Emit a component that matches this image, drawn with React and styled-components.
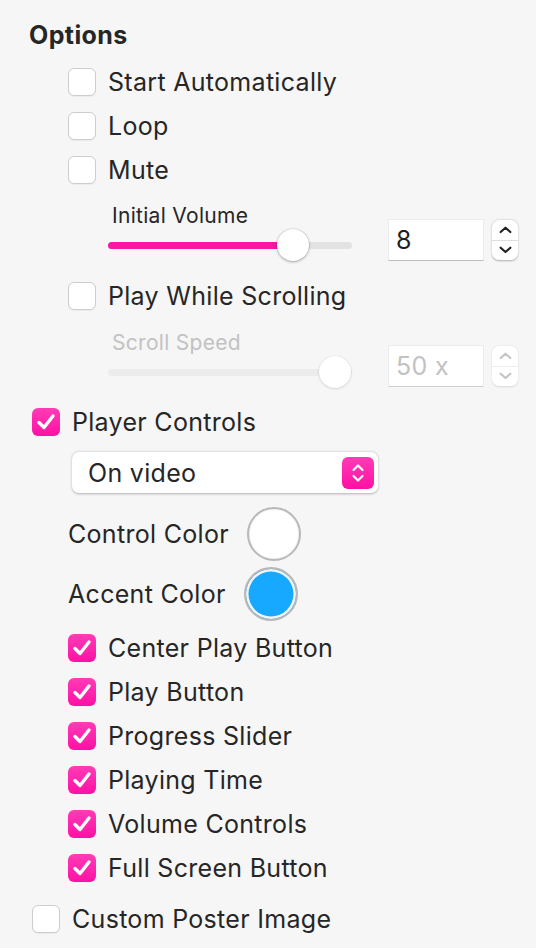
import React from 'react';
import styled, { createGlobalStyle } from 'styled-components';

const GlobalStyle = createGlobalStyle`
  body {
    margin: 0;
    background: #f6f6f6;
    font-family: Inter, "Liberation Sans", sans-serif;
    color: #262626;
  }
`;

const PINK = 'linear-gradient(#ff3cb6, #ff10a4)';

const Panel = styled.div`
  width: 536px;
  height: 948px;
  padding-left: 32px;
  box-sizing: border-box;
  overflow: hidden;
`;

const Heading = styled.div`
  font-size: 25px;
  font-weight: 700;
  letter-spacing: 0.4px;
  line-height: 26px;
  margin: 22px 0 12px -3px;
`;

const Group = styled.div`
  padding-left: ${p => p.indent ?? 36}px;
  margin-top: ${p => p.top || 0}px;
`;

const Row = styled.label`
  display: flex;
  align-items: center;
  gap: 12px;
  height: 44px;
  font-size: 25px;
  letter-spacing: 0.3px;
`;

const Box = styled.span`
  width: 28px;
  height: 28px;
  flex-shrink: 0;
  box-sizing: border-box;
  border-radius: 6px;
  display: flex;
  align-items: center;
  justify-content: center;
  background: ${p => (p.checked ? PINK : '#fff')};
  border: ${p => (p.checked ? 'none' : '1px solid #cdcdcd')};
  box-shadow: ${p => (p.checked ? 'none' : '0 1px 1px rgba(0,0,0,0.05)')};
`;

const SliderBlock = styled.div`
  display: flex;
  align-items: flex-end;
  margin-top: ${p => p.top}px;
`;

const SliderCol = styled.div`
  width: 244px;
  margin-left: 76px;
`;

const SmallLabel = styled.div`
  font-size: 21px;
  letter-spacing: 0.3px;
  line-height: 22px;
  margin-left: 4px;
  color: ${p => (p.disabled ? '#c2c2c2' : '#262626')};
`;

const Track = styled.div`
  position: relative;
  height: 32px;
  margin-top: 2px;
  &::before {
    content: '';
    position: absolute;
    left: 0;
    right: 0;
    top: 13px;
    height: 7px;
    border-radius: 4px;
    background: ${p => (p.disabled ? '#ececec' : '#e2e2e2')};
  }
`;

const Fill = styled.div`
  position: absolute;
  left: 0;
  top: 13px;
  height: 7px;
  border-radius: 4px;
  background: #ff14a8;
`;

const Thumb = styled.div`
  position: absolute;
  top: 0;
  width: 32px;
  height: 32px;
  margin-left: -16px;
  border-radius: 50%;
  background: #fff;
  box-shadow: 0 1px 3px rgba(0, 0, 0, ${p => (p.disabled ? 0.12 : 0.3)}),
    0 0 0 0.5px rgba(0, 0, 0, ${p => (p.disabled ? 0.06 : 0.12)});
`;

const NumberWrap = styled.div`
  display: flex;
  align-items: center;
  gap: 8px;
  margin-left: 36px;
  margin-bottom: ${p => p.bottom || 0}px;
`;

const NumberInput = styled.div`
  width: 96px;
  height: 42px;
  box-sizing: border-box;
  background: #fff;
  border: 1px solid #ececec;
  border-bottom: 1px solid ${p => (p.disabled ? '#cfcfcf' : '#bdbdbd')};
  padding-left: 7px;
  font-size: 25px;
  line-height: 40px;
  letter-spacing: 0.3px;
  color: ${p => (p.disabled ? '#c2c2c2' : '#1e1e1e')};
`;

const Stepper = styled.div`
  width: 26px;
  height: 40px;
  border-radius: 7px;
  background: #fff;
  box-shadow: 0 0.5px 2px rgba(0, 0, 0, ${p => (p.disabled ? 0.12 : 0.3)});
  display: flex;
  flex-direction: column;
  color: ${p => (p.disabled ? '#c4c4c4' : '#222')};
  & > div {
    flex: 1;
    display: flex;
    align-items: center;
    justify-content: center;
  }
  & > div + div {
    border-top: 1px solid ${p => (p.disabled ? '#eee' : '#dedede')};
  }
`;

const Select = styled.div`
  width: 306px;
  height: 41px;
  box-sizing: border-box;
  margin: 8px 0 0 40px;
  background: #fff;
  border-radius: 7px;
  box-shadow: 0 0.5px 2.5px rgba(0, 0, 0, 0.28);
  display: flex;
  align-items: center;
  justify-content: space-between;
  padding: 0 4px 0 16px;
  font-size: 25px;
  letter-spacing: 0.3px;
`;

const SelectButton = styled.div`
  width: 32px;
  height: 32px;
  border-radius: 6px;
  background: ${PINK};
  display: flex;
  align-items: center;
  justify-content: center;
`;

const ColorRow = styled.div`
  display: flex;
  align-items: center;
  gap: 18px;
  height: 56px;
  font-size: 25px;
  letter-spacing: 0.3px;
  margin-top: ${p => p.top}px;
`;

const Swatch = styled.div`
  width: 54px;
  height: 54px;
  box-sizing: border-box;
  border-radius: 50%;
  border: 2.5px solid #b8b8b8;
  background: ${p => p.color};
  box-shadow: inset 0 0 0 ${p => (p.ring ? 2.5 : 1)}px #f4f4f4;
`;

const Check = () => (
  <svg width="20" height="18" viewBox="0 0 20 18">
    <path d="M3 9.5 L8 14.5 L17 3" fill="none" stroke="#fff" strokeWidth="3.4" strokeLinecap="round" strokeLinejoin="round" />
  </svg>
);

const Chevron = ({ down, color = 'currentColor', size = 13 }) => (
  <svg width={size} height={size * 0.6} viewBox="0 0 12 7">
    <path d={down ? 'M1.5 1.5 L6 5.5 L10.5 1.5' : 'M1.5 5.5 L6 1.5 L10.5 5.5'} fill="none" stroke={color} strokeWidth="2" strokeLinecap="round" strokeLinejoin="round" />
  </svg>
);

const CheckRow = ({ label, checked }) => (
  <Row>
    <Box checked={checked}>{checked && <Check />}</Box>
    {label}
  </Row>
);

const NumberField = ({ value, disabled, bottom }) => (
  <NumberWrap bottom={bottom}>
    <NumberInput disabled={disabled}>{value}</NumberInput>
    <Stepper disabled={disabled}>
      <div><Chevron /></div>
      <div><Chevron down /></div>
    </Stepper>
  </NumberWrap>
);

const Slider = ({ label, value, disabled, top, bottom }) => (
  <SliderBlock top={top}>
    <SliderCol>
      <SmallLabel disabled={disabled}>{label}</SmallLabel>
      <Track disabled={disabled}>
        {!disabled && <Fill style={{ width: `${value}%` }} />}
        <Thumb disabled={disabled} style={{ left: `${value}%` }} />
      </Track>
    </SliderCol>
    <NumberField value={disabled ? '50 x' : '8'} disabled={disabled} bottom={bottom} />
  </SliderBlock>
);

const controls = [
  'Center Play Button',
  'Play Button',
  'Progress Slider',
  'Playing Time',
  'Volume Controls',
  'Full Screen Button',
];

export default function App() {
  return (
    <Panel>
      <GlobalStyle />
      <Heading>Options</Heading>
      <Group>
        <CheckRow label="Start Automatically" />
        <CheckRow label="Loop" />
        <CheckRow label="Mute" />
      </Group>
      <Slider label="Initial Volume" value={76} top={13} />
      <Group top={13}>
        <CheckRow label="Play While Scrolling" />
      </Group>
      <Slider label="Scroll Speed" value={93} disabled top={14} bottom={1} />
      <Group indent={0} top={12}>
        <CheckRow label="Player Controls" checked />
      </Group>
      <Select>
        On video
        <SelectButton>
          <svg width="16" height="24" viewBox="0 0 16 24">
            <path d="M3.5 9 L8 4.5 L12.5 9 M3.5 15 L8 19.5 L12.5 15" fill="none" stroke="#fff" strokeWidth="2.2" strokeLinecap="round" strokeLinejoin="round" />
          </svg>
        </SelectButton>
      </Select>
      <Group top={13}>
        <ColorRow top={0}>
          Control Color
          <Swatch color="#fff" />
        </ColorRow>
        <ColorRow top={4}>
          Accent Color
          <Swatch color="#16a9ff" ring />
        </ColorRow>
        <Group indent={0} top={4}>
          {controls.map(c => (
            <CheckRow key={c} label={c} checked />
          ))}
        </Group>
      </Group>
      <Group indent={0} top={7}>
        <CheckRow label="Custom Poster Image" />
      </Group>
    </Panel>
  );
}
